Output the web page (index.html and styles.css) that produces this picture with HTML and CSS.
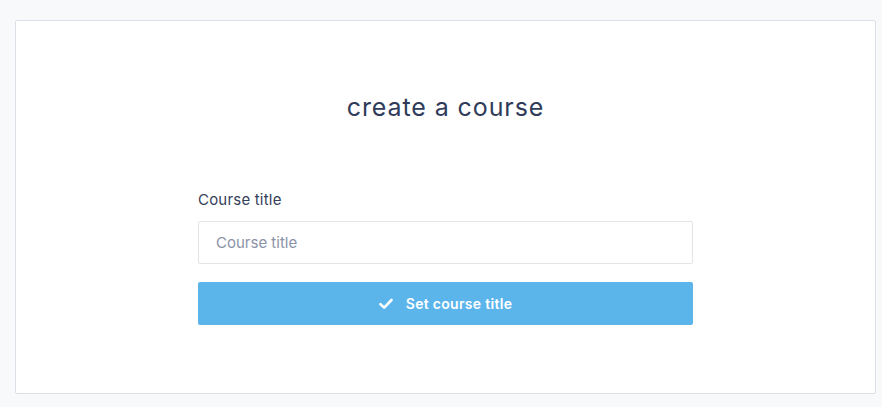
FILE: index.html
```html
<!DOCTYPE html>
<html lang="en">
<head>
    <meta charset="UTF-8">
    <meta name="viewport" content="width=device-width, initial-scale=1.0">
    <title>Create a course</title>
    <link rel="stylesheet" href="styles.css">
</head>
<body>
    <div class="course-card">
        <h1 class="course-heading">create a course</h1>

        <form class="course-form">
            <label class="field-label" for="course-title">Course title</label>
            <input class="field-input" id="course-title" type="text" placeholder="Course title">
            <button class="submit-btn" type="button">
                <svg class="check-icon" width="14" height="12" viewBox="0 0 14 12">
                    <path d="M1.5 6.2 L5.2 9.6 L12.5 2" fill="none" stroke="#fff" stroke-width="2.6" stroke-linecap="round" stroke-linejoin="round"/>
                </svg>
                Set course title
            </button>
        </form>
    </div>
</body>
</html>
```

FILE: styles.css
```css
body {
    margin: 0;
    padding: 20px 6px 13px 15px;
    background-color: #f8f9fb;
    font-family: Inter, 'Noto Sans', sans-serif;
}

/* main card */
.course-card {
    height: 374px;
    box-sizing: border-box;
    background-color: #fff;
    border: 1px solid #dedfe6;
    border-radius: 2px;
    display: flex;
    flex-direction: column;
    align-items: center;
}

.course-heading {
    margin: 69px 0 0;
    font-size: 25px;
    font-weight: 400;
    line-height: 34px;
    color: #2f3b59;
    letter-spacing: 0.9px;
}

.course-form {
    width: 495px;
    margin-top: 66px;
    display: flex;
    flex-direction: column;
}

.field-label {
    font-size: 15px;
    color: #34405a;
    line-height: 20px;
    letter-spacing: 0.2px;
}

.field-input {
    margin-top: 11px;
    height: 43px;
    box-sizing: border-box;
    border: 1px solid #e3e4e8;
    border-radius: 2px;
    padding: 0 17px;
    font-family: inherit;
    font-size: 15px;
    color: #34405a;
    outline: none;
}
.field-input::placeholder {
    color: #8a93a6;
}

.submit-btn {
    margin-top: 18px;
    height: 43px;
    border: none;
    border-radius: 2px;
    background-color: #5bb5ea;
    color: #fff;
    font-family: inherit;
    font-size: 14px;
    font-weight: 600;
    letter-spacing: 0.3px;
    display: flex;
    align-items: center;
    justify-content: center;
    gap: 13px;
    cursor: pointer;
}
```
